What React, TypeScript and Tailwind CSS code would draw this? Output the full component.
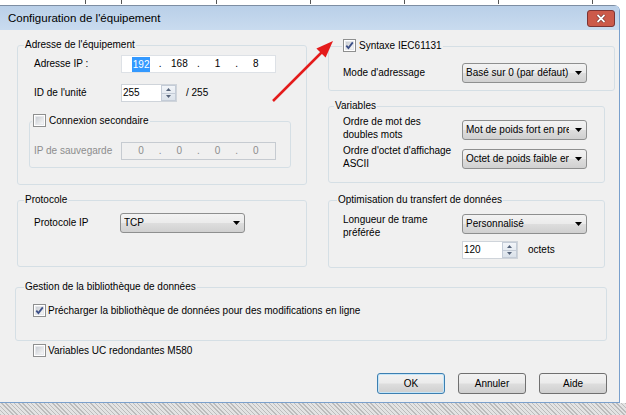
import React from 'react';

const groupBox = 'rounded-[3px] border border-[#d5dfe5]';

function Check({ checked = false }: { checked?: boolean }) {
  return (
    <span className="relative flex h-[13px] w-[13px] shrink-0 items-center justify-center border border-[#8e8f8f] bg-white">
      <span className="h-[9px] w-[9px] border border-[#e6e8ec] bg-gradient-to-br from-[#c9cdd3] to-[#f7f7f7]" />
      {checked && (
        <svg viewBox="0 0 11 11" className="absolute left-0 top-0 h-[11px] w-[11px]">
          <path d="M2.3 5.6 L4.4 8 L8.8 2.4" fill="none" stroke="#3d5088" strokeWidth="1.8" />
        </svg>
      )}
    </span>
  );
}

function ArrowDown() {
  return (
    <svg viewBox="0 0 7 4" className="h-[4px] w-[7px] shrink-0">
      <path d="M0 0 H7 L3.5 4 Z" fill="#000" />
    </svg>
  );
}

function Combo({ value }: { value: string }) {
  return (
    <div className="flex h-[20px] w-[125px] shrink-0 items-center rounded-[3px] border border-[#8e8f8f] bg-[linear-gradient(#f3f3f3,#ebebeb_48%,#dddddd_52%,#d0d0d0)] pl-[3px]">
      <span className="w-[103px] overflow-hidden whitespace-nowrap">{value}</span>
      <span className="ml-[6px] flex">
        <ArrowDown />
      </span>
    </div>
  );
}

function Spin({ value }: { value: string }) {
  return (
    <div className="flex h-[18px] w-[56px] shrink-0 border border-[#cfd4da] bg-white">
      <span className="flex flex-1 items-center pl-[1px]">{value}</span>
      <span className="flex w-[15px] flex-col border border-[#c4ccd7] bg-gradient-to-b from-[#f2f5f9] to-[#dbe2ea]">
        <span className="flex flex-1 items-center justify-center border-b border-[#c4ccd7]">
          <svg viewBox="0 0 5 3" className="h-[3px] w-[5px]">
            <path d="M0 3 H5 L2.5 0 Z" fill="#55637a" />
          </svg>
        </span>
        <span className="flex flex-1 items-center justify-center">
          <svg viewBox="0 0 5 3" className="h-[3px] w-[5px]">
            <path d="M0 0 H5 L2.5 3 Z" fill="#55637a" />
          </svg>
        </span>
      </span>
    </div>
  );
}

function IpField({ parts, disabled = false }: { parts: string[]; disabled?: boolean }) {
  return (
    <div
      className={`flex h-[18px] w-[155px] shrink-0 items-center border ${
        disabled ? 'border-[#c6cbd1] bg-[#f0f0f0] text-[#8d8d8d]' : 'border-[#dde1e6] bg-white'
      }`}
    >
      {parts.map((p, i) => (
        <React.Fragment key={i}>
          {i > 0 && <span className="flex w-0 justify-center">.</span>}
          <span className="flex flex-1 justify-center">
            {i === 0 && !disabled ? (
              <span className="bg-[#3399ff] px-[1px] leading-[15px] text-white">{p}</span>
            ) : (
              p
            )}
          </span>
        </React.Fragment>
      ))}
    </div>
  );
}

function Btn({ children, isDefault = false }: { children: React.ReactNode; isDefault?: boolean }) {
  return (
    <button
      type="button"
      className={`h-[21px] w-[68px] rounded-[3px] border bg-[linear-gradient(#f2f2f2,#ebebeb_48%,#dddddd_52%,#cfcfcf)] ${
        isDefault ? 'border-[#3c7fb1] shadow-[inset_0_0_0_1px_#c4e5f8]' : 'border-[#707070]'
      }`}
    >
      {children}
    </button>
  );
}

export default function App() {
  return (
    <div className="relative h-[415px] w-[626px] overflow-hidden bg-white font-['Liberation_Sans',Arial,sans-serif] text-[10px] leading-[12px] text-black">
      {/* bits of the page behind the dialog */}
      <div className="flex h-[5px] items-start">
        <span className="ml-[85px] h-[4px] w-px bg-[#555]" />
        <span className="ml-[35px] h-[4px] w-px bg-[#555]" />
        <span className="ml-[94px] h-[4px] w-px bg-[#555]" />
        <span className="ml-[93px] h-[4px] w-px bg-[#555]" />
        <span className="ml-[93px] h-[4px] w-px bg-[#555]" />
        <span className="ml-[93px] h-[4px] w-px bg-[#555]" />
        <span className="ml-[93px] h-[4px] w-px bg-[#555]" />
      </div>

      {/* window */}
      <div className="w-[620px] overflow-hidden rounded-tr-[6px] border-b border-r border-[#7aa0cc]">
        <div className="flex h-[25px] items-center justify-between border-t border-[#7d8ea3] bg-gradient-to-b from-[#b9cfe8] to-[#c9dbef] pr-[4px]">
          <span className="pl-[8px] text-[11.5px] leading-[14px]">Configuration de l'équipement</span>
          <div className="flex h-[17px] w-[28px] shrink-0 items-center justify-center rounded-[3px] border border-[#7b3434] bg-[#cc5a4a]">
            <svg viewBox="0 0 10 9" className="h-[9px] w-[10px]">
              <path d="M1.5 1 L8.5 8 M8.5 1 L1.5 8" stroke="#5a1f1f" strokeWidth="3" />
              <path d="M1.5 1 L8.5 8 M8.5 1 L1.5 8" stroke="#fff" strokeWidth="1.8" />
            </svg>
          </div>
        </div>

        <div className="flex h-[372px] flex-col bg-[#f0f0f0]">
          <div className="flex">
            {/* left column */}
            <div className="ml-[17px] flex w-[290px] flex-col">
              <fieldset className={`mt-[9px] h-[146px] ${groupBox}`}>
                <legend className="ml-[6px] px-[1px] leading-[12px]">Adresse de l'équipement</legend>
                <div className="mt-[4px] flex h-[18px] items-center pl-[16px]">
                  <span className="w-[87px]">Adresse IP :</span>
                  <IpField parts={['192', '168', '1', '8']} />
                </div>
                <div className="mt-[11px] flex h-[18px] items-center pl-[16px]">
                  <span className="w-[87px]">ID de l'unité</span>
                  <Spin value="255" />
                  <span className="ml-[9px]">/ 255</span>
                </div>
                <fieldset className={`ml-[11px] mt-[12px] h-[54px] w-[262px] ${groupBox}`}>
                  <legend className="ml-[2px] px-[1px]">
                    <span className="inline-flex h-[13px] items-center gap-[3px]">
                      <Check />
                      Connexion secondaire
                    </span>
                  </legend>
                  <div className="mt-[14px] flex h-[18px] items-center pl-[4px] text-[#8d8d8d]">
                    <span className="w-[87px]">IP de sauvegarde</span>
                    <IpField parts={['0', '0', '0', '0']} disabled />
                  </div>
                </fieldset>
              </fieldset>

              <fieldset className={`mt-[9px] h-[73px] ${groupBox}`}>
                <legend className="ml-[6px] px-[1px] leading-[12px]">Protocole</legend>
                <div className="mt-[7px] flex h-[20px] items-center pl-[16px]">
                  <span className="w-[86px]">Protocole IP</span>
                  <Combo value="TCP" />
                </div>
              </fieldset>
            </div>

            {/* right column */}
            <div className="ml-[21px] flex w-[287px] flex-col">
              <fieldset className={`mt-[9px] h-[52px] w-[287px] ${groupBox}`}>
                <legend className="ml-[13px] px-[1px]">
                  <span className="inline-flex h-[13px] items-center gap-[3px]">
                    <Check checked />
                    Syntaxe IEC61131
                  </span>
                </legend>
                <div className="mt-[10px] flex h-[20px] items-center pl-[14px]">
                  <span className="w-[119px]">Mode d'adressage</span>
                  <Combo value="Basé sur 0 (par défaut)" />
                </div>
              </fieldset>

              <fieldset className={`mt-[9px] h-[83px] w-[277px] ${groupBox}`}>
                <legend className="ml-[5px] px-[1px] leading-[12px]">Variables</legend>
                <div className="mt-[3px] flex items-start pl-[14px]">
                  <span className="w-[119px] leading-[13px]">
                    Ordre de mot des
                    <br />
                    doubles mots
                  </span>
                  <div className="mt-[5px]">
                    <Combo value="Mot de poids fort en premier" />
                  </div>
                </div>
                <div className="mt-[3px] flex items-start pl-[14px]">
                  <span className="w-[119px] leading-[13px]">
                    Ordre d'octet d'affichage
                    <br />
                    ASCII
                  </span>
                  <div className="mt-[5px]">
                    <Combo value="Octet de poids faible en premier" />
                  </div>
                </div>
              </fieldset>

              <fieldset className={`mt-[11px] h-[74px] w-[277px] ${groupBox}`}>
                <legend className="ml-[8px] px-[1px] leading-[12px]">Optimisation du transfert de données</legend>
                <div className="mt-[7px] flex items-start pl-[14px]">
                  <span className="w-[119px] leading-[13px]">
                    Longueur de trame
                    <br />
                    préférée
                  </span>
                  <div className="mt-[1px]">
                    <Combo value="Personnalisé" />
                  </div>
                </div>
                <div className="mt-[2px] flex h-[18px] items-center pl-[133px]">
                  <Spin value="120" />
                  <span className="ml-[10px]">octets</span>
                </div>
              </fieldset>
            </div>
          </div>

          <fieldset className={`ml-[15px] mt-[13px] h-[60px] w-[592px] ${groupBox}`}>
            <legend className="ml-[8px] px-[1px] leading-[12px]">Gestion de la bibliothèque de données</legend>
            <div className="mt-[11px] flex h-[13px] items-center gap-[2px] pl-[17px]">
              <Check checked />
              <span>Précharger la bibliothèque de données pour des modifications en ligne</span>
            </div>
          </fieldset>

          <div className="ml-[33px] mt-[3px] flex h-[13px] items-center gap-[2px]">
            <Check />
            <span>Variables UC redondantes M580</span>
          </div>

          <div className="mt-[16px] flex justify-end gap-[13px] pr-[12px]">
            <Btn isDefault>OK</Btn>
            <Btn>Annuler</Btn>
            <Btn>Aide</Btn>
          </div>
        </div>
      </div>

      {/* desktop pattern under the dialog */}
      <div className="h-[12px] bg-[repeating-linear-gradient(45deg,#bcbcbc_0_1px,#e3e3e3_1px_3px)]" />

      {/* annotation arrow */}
      <svg className="pointer-events-none absolute left-0 top-0 h-[415px] w-[626px]" viewBox="0 0 626 415">
        <line x1="273" y1="101" x2="322" y2="52" stroke="#e41b1b" strokeWidth="2.5" />
        <polygon points="333,41 325.6,57.6 316.4,48.4" fill="#e41b1b" />
      </svg>
    </div>
  );
}
